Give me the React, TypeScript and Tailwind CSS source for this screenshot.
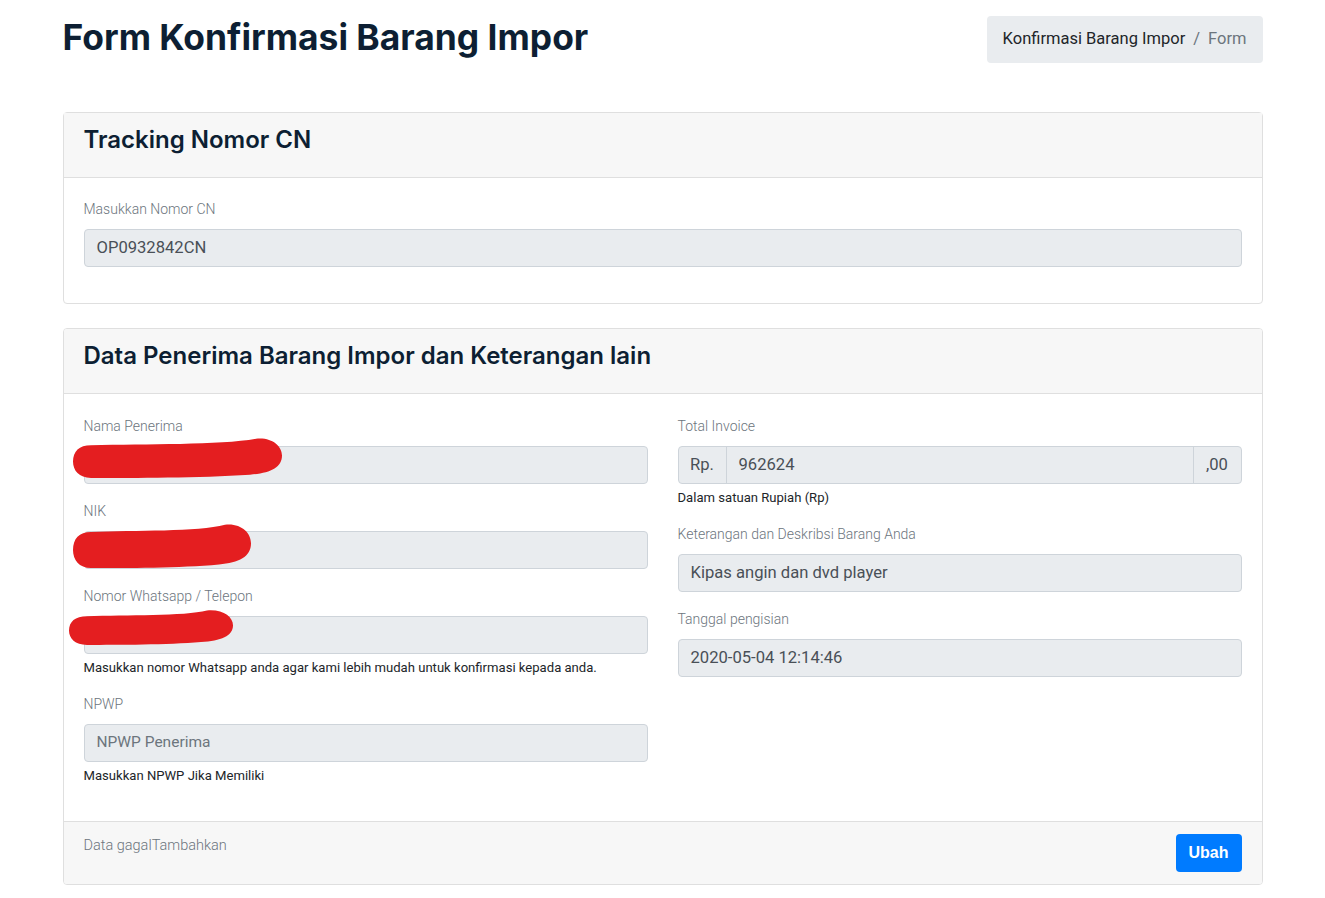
import React from "react";

const heading = "font-['Inter',sans-serif]";
const body = "font-['Roboto',sans-serif]";

function Redaction({ className, w, h }: { className: string; w: number; h: number }) {
  // hand-drawn red marker stroke hiding personal data
  return (
    <svg
      className={`pointer-events-none absolute ${className}`}
      width={w}
      height={h}
      viewBox={`0 0 ${w} ${h}`}
    >
      <path
        d={`M18,${h * 0.2} C${w * 0.35},${h * 0.16} ${w * 0.7},${h * 0.2} ${w - 26},${h * 0.04} C${w - 10},0 ${w},${h * 0.22} ${w},${h * 0.45} C${w},${h * 0.75} ${w - 12},${h * 0.88} ${w - 32},${h * 0.92} C${w * 0.6},${h} ${w * 0.3},${h} 18,${h} C6,${h} 0,${h * 0.82} 0,${h * 0.6} C0,${h * 0.35} 6,${h * 0.2} 18,${h * 0.2} Z`}
        fill="#e41e20"
      />
    </svg>
  );
}

function Label({ children }: { children: React.ReactNode }) {
  return <label className="mb-2 block text-[14px] font-light leading-[23px] text-[#6c757d]">{children}</label>;
}

function Input({ value, placeholder }: { value?: string; placeholder?: string }) {
  return (
    <div className="flex h-[38px] items-center rounded border border-[#ced4da] bg-[#e9ecef] px-3 text-[16.6px] text-[#495057]">
      {value ?? <span className="text-[15.5px] text-[#6c757d]">{placeholder}</span>}
    </div>
  );
}

function Help({ children }: { children: React.ReactNode }) {
  return <p className="mt-1 text-[13.1px] leading-[19px] text-[#212529]">{children}</p>;
}

function CardHeader({ title }: { title: string }) {
  return (
    <div className="flex h-[65px] items-center border-b border-[#dfdfdf] bg-[#f7f7f7] px-5 pb-[12px]">
      <h4 className={`${heading} text-[24px] font-semibold leading-[29px] text-[#0d1f33]`}>{title}</h4>
    </div>
  );
}

export default function App() {
  return (
    <div className={`${body} min-h-screen bg-white`}>
      <div className="mx-auto w-[1200px] pt-4">
        <div className="flex items-start justify-between">
          <h1 className={`${heading} -mt-[2px] text-[35.4px] font-bold leading-[48px] text-[#0d1f33]`}>
            Form Konfirmasi Barang Impor
          </h1>
          <nav className="flex h-[47px] items-center rounded bg-[#e9ecef] px-4 text-[16.5px]">
            <span className="text-[#212529]">Konfirmasi Barang Impor</span>
            <span className="px-2 text-[#6c757d]">/</span>
            <span className="text-[#6c757d]">Form</span>
          </nav>
        </div>

        <div className="mt-[49px] rounded border border-[#dfdfdf]">
          <CardHeader title="Tracking Nomor CN" />
          <div className="px-5 pt-5 pb-[20px]">
            <div className="mb-4">
              <Label>Masukkan Nomor CN</Label>
              <Input value="OP0932842CN" />
            </div>
          </div>
        </div>

        <div className="mt-[24px] overflow-hidden rounded border border-[#dfdfdf]">
          <CardHeader title="Data Penerima Barang Impor dan Keterangan lain" />
          <div className="grid grid-cols-2 gap-x-[30px] px-5 pt-[21px] pb-5">
            <div>
              <div className="mb-4">
                <Label>Nama Penerima</Label>
                <div className="relative">
                  <Input value="" />
                  <Redaction className="-left-[11px] -top-[9px]" w={209} h={41} />
                </div>
              </div>
              <div className="mb-4">
                <Label>NIK</Label>
                <div className="relative">
                  <Input value="" />
                  <Redaction className="-left-[11px] -top-[8px]" w={178} h={45} />
                </div>
              </div>
              <div className="mb-4">
                <Label>Nomor Whatsapp / Telepon</Label>
                <div className="relative">
                  <Input value="" />
                  <Redaction className="-left-[15px] -top-[7px]" w={164} h={36} />
                </div>
                <Help>Masukkan nomor Whatsapp anda agar kami lebih mudah untuk konfirmasi kepada anda.</Help>
              </div>
              <div className="mb-4">
                <Label>NPWP</Label>
                <Input placeholder="NPWP Penerima" />
                <Help>Masukkan NPWP Jika Memiliki</Help>
              </div>
            </div>

            <div>
              <div className="mb-4">
                <Label>Total Invoice</Label>
                <div className="flex h-[38px] rounded border border-[#ced4da] bg-[#e9ecef] text-[16.6px] text-[#495057]">
                  <span className="flex w-[48px] items-center justify-center border-r border-[#ced4da]">Rp.</span>
                  <span className="flex flex-1 items-center px-3">962624</span>
                  <span className="flex w-[48px] items-center justify-center border-l border-[#ced4da]">,00</span>
                </div>
                <Help>Dalam satuan Rupiah (Rp)</Help>
              </div>
              <div className="mb-4">
                <Label>Keterangan dan Deskribsi Barang Anda</Label>
                <Input value="Kipas angin dan dvd player" />
              </div>
              <div className="mb-4">
                <Label>Tanggal pengisian</Label>
                <Input value="2020-05-04 12:14:46" />
              </div>
            </div>
          </div>
          <div className="flex items-start justify-between border-t border-[#dfdfdf] bg-[#f7f7f7] px-5 py-3">
            <span className="mt-[1px] text-[14.5px] font-light text-[#6c757d]">Data gagalTambahkan</span>
            <button className="h-[38px] rounded bg-[#007bff] px-[13px] font-['Liberation_Sans',sans-serif] text-base font-semibold text-white">
              Ubah
            </button>
          </div>
        </div>
      </div>
    </div>
  );
}
